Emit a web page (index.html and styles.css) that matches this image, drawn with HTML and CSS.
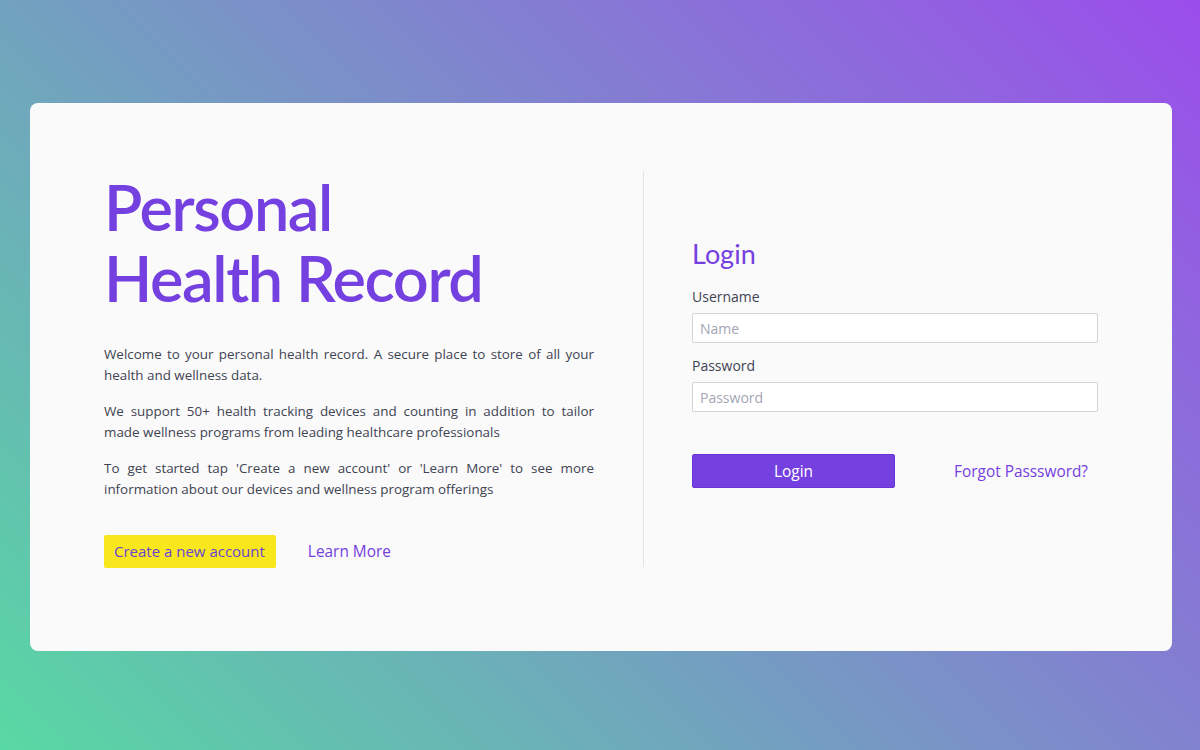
FILE: index.html
```html
<!DOCTYPE html>
<html lang="en">
<head>
<meta charset="utf-8">
<title>Personal Health Record</title>
<link rel="stylesheet" href="styles.css">
</head>
<body>
<main class="card">
  <section class="intro">
    <h1 class="title">Personal<br>Health Record</h1>
    <p class="text">Welcome to your personal health record. A secure place to store of all your health and wellness data.</p>
    <p class="text">We support 50+ health tracking devices and counting in addition to tailor made wellness programs from leading healthcare professionals</p>
    <p class="text">To get started tap 'Create a new account' or 'Learn More' to see more information about our devices and wellness program offerings</p>
    <div class="actions">
      <a class="btn-create" href="#">Create a new account</a>
      <a class="link" href="#">Learn More</a>
    </div>
  </section>
  <div class="divider"></div>
  <section class="login">
    <h2 class="login-title">Login</h2>
    <label class="label" for="user">Username</label>
    <input class="input" id="user" type="text" placeholder="Name">
    <label class="label" for="pass">Password</label>
    <input class="input" id="pass" type="password" placeholder="Password">
    <div class="login-actions">
      <button class="btn-login" type="button">Login</button>
      <a class="link forgot" href="#">Forgot Passsword?</a>
    </div>
  </section>
</main>
</body>
</html>
```

FILE: styles.css
```css
html, body {
  margin: 0;
  padding: 0;
}
body {
  width: 1200px;
  height: 750px;
  box-sizing: border-box;
  padding: 103px 28px 99px 30px;
  background: linear-gradient(45deg, #58d8a3 0%, #9b4deb 100%);
  font-family: "Open Sans", "Liberation Sans", sans-serif;
  color: #3e4453;
}
.card {
  box-sizing: border-box;
  height: 548px;
  background: #fafafa;
  border-radius: 8px;
  padding: 68px 74px 84px 74px;
  display: flex;
  align-items: stretch;
}
.intro {
  width: 490px;
  flex: none;
}
.title {
  margin: 0 0 31px;
  font-family: Lato, sans-serif;
  font-weight: 600;
  font-size: 63px;
  line-height: 71px;
  color: #7540e0;
  letter-spacing: -1.4px;
}
.text {
  margin: 0 0 15px;
  font-size: 13.4px;
  line-height: 21px;
  text-align: justify;
  color: #3e4453;
}
.actions {
  margin-top: 35px;
  display: flex;
  align-items: center;
}
.btn-create {
  display: inline-block;
  background: #f8e71c;
  color: #6a44d8;
  font-size: 15px;
  line-height: 33px;
  height: 33px;
  padding: 0 11px 0 10px;
  border-radius: 2px;
  text-decoration: none;
}
.link {
  color: #7540e0;
  text-decoration: none;
  font-size: 15.4px;
}
.actions .link {
  margin-left: 32px;
}
.divider {
  width: 1px;
  background: #e4e4e6;
  margin: 0 48px 0 49px;
  flex: none;
}
.login {
  flex: 1;
  display: flex;
  flex-direction: column;
  justify-content: center;
  padding-bottom: 14px;
}
.login-title {
  margin: 0 0 15px;
  font-family: Lato, sans-serif;
  font-weight: 400;
  font-size: 27px;
  line-height: 36px;
  color: #7540e0;
}
.label {
  font-size: 14px;
  line-height: 20px;
  color: #3e4453;
  margin-bottom: 6px;
}
.input {
  box-sizing: border-box;
  height: 30px;
  width: 100%;
  border: 1px solid #d3d3d8;
  border-radius: 2px;
  background: #fff;
  padding: 0 7px;
  font-family: "Open Sans", sans-serif;
  font-size: 14px;
  color: #3e4453;
  margin: 0 0 13px;
}
.input::placeholder {
  color: #a3a6b4;
}
.login-actions {
  margin-top: 29px;
  display: flex;
  align-items: center;
}
.btn-login {
  width: 203px;
  height: 34px;
  border: 1px solid #6a35d6;
  border-radius: 2px;
  background: #7540e0;
  color: #fff;
  font-family: "Open Sans", sans-serif;
  font-size: 15.5px;
  cursor: pointer;
}
.forgot {
  margin-left: auto;
  margin-right: 10px;
  font-size: 15.4px;
}
```
